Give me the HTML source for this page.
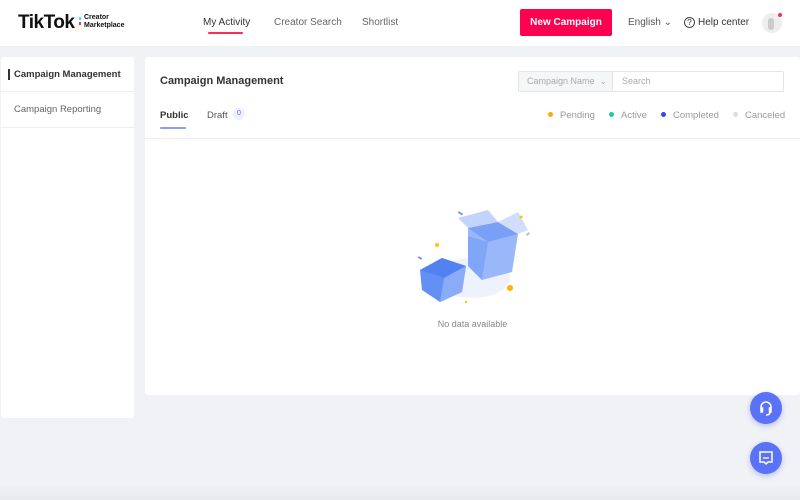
<!DOCTYPE html><html><head><style>
*{margin:0;padding:0;box-sizing:border-box}
body{width:800px;height:500px;background:#f1f2f5;font-family:"Liberation Sans",sans-serif;position:relative;overflow:hidden;color:#333}
.a{position:absolute}
</style></head><body>
<div class="a" style="left:0;top:0;width:800px;height:46px;background:#fff"></div>
<div class="a" style="left:18px;top:12px;font-size:19px;font-weight:bold;color:#111;letter-spacing:-0.5px">TikTok</div>
<div class="a" style="left:79px;top:17px;width:2px;height:3px;background:#25f4ee"></div>
<div class="a" style="left:79px;top:22px;width:2px;height:3px;background:#fe2c55"></div>
<div class="a" style="left:84px;top:14px;font-size:7px;font-weight:bold;line-height:8px;color:#111">Creator<br>Marketplace</div>
<div class="a" style="left:203px;top:17px;font-size:10px;color:#333">My Activity</div>
<div class="a" style="left:208px;top:32px;width:35px;height:2px;background:#fe2c55;border-radius:1px"></div>
<div class="a" style="left:274px;top:17px;font-size:10px;color:#666">Creator Search</div>
<div class="a" style="left:362px;top:17px;font-size:10px;color:#666">Shortlist</div>
<div class="a" style="left:520px;top:9px;width:92px;height:27px;background:#fe0050;border-radius:2px;color:#fff;font-size:10px;font-weight:bold;text-align:center;line-height:27px">New Campaign</div>
<div class="a" style="left:628px;top:17px;font-size:10px;color:#555">English ⌄</div>
<div class="a" style="left:684px;top:17px;width:11px;height:11px;border:1px solid #444;border-radius:50%;font-size:8px;text-align:center;line-height:9px">?</div>
<div class="a" style="left:698px;top:17px;font-size:10px;color:#333">Help center</div>
<div class="a" style="left:762px;top:13px;width:20px;height:20px;border-radius:50%;background:#eee"></div>
<div class="a" style="left:768px;top:18px;width:6px;height:12px;border-radius:3px;background:#ccc"></div>
<div class="a" style="left:778px;top:13px;width:4px;height:4px;border-radius:50%;background:#fe2c55"></div>

<div class="a" style="left:1px;top:57px;width:133px;height:361px;background:#fff;border-radius:3px"></div>
<div class="a" style="left:1px;top:91px;width:133px;height:1px;background:#eee"></div>
<div class="a" style="left:1px;top:127px;width:133px;height:1px;background:#eee"></div>
<div class="a" style="left:8px;top:69px;width:2px;height:11px;background:#333"></div>
<div class="a" style="left:14px;top:69px;font-size:9.5px;font-weight:bold;color:#333">Campaign Management</div>
<div class="a" style="left:14px;top:104px;font-size:9.5px;color:#666">Campaign Reporting</div>

<div class="a" style="left:145px;top:57px;width:655px;height:338px;background:#fff;border-radius:3px"></div>
<div class="a" style="left:160px;top:75px;font-size:11px;font-weight:bold;color:#333">Campaign Management</div>
<div class="a" style="left:518px;top:71px;width:266px;height:21px;border:1px solid #e3e5ea;border-radius:2px;background:#fff"></div>
<div class="a" style="left:519px;top:72px;width:94px;height:19px;background:#f5f6f8;border-right:1px solid #e3e5ea;font-size:9px;color:#aaa;line-height:19px;padding-left:8px">Campaign Name &nbsp;⌄</div>
<div class="a" style="left:622px;top:76px;font-size:9px;color:#aaa">Search</div>
<div class="a" style="left:160px;top:110px;font-size:9.5px;font-weight:bold;color:#333">Public</div>
<div class="a" style="left:160px;top:127px;width:26px;height:2px;background:#8c9cf5;border-radius:1px"></div>
<div class="a" style="left:207px;top:110px;font-size:9.5px;color:#555">Draft</div>
<div class="a" style="left:233px;top:108px;width:12px;height:12px;border-radius:50%;background:#eef0fd;color:#5b6cf0;font-size:7px;text-align:center;line-height:12px">0</div>
<div class="a" style="left:145px;top:138px;width:655px;height:1px;background:#eee"></div>
<div class="a" style="left:548px;top:112px;width:5px;height:5px;border-radius:50%;background:#ffab00"></div>
<div class="a" style="left:560px;top:110px;font-size:9.5px;color:#999">Pending</div>
<div class="a" style="left:609px;top:112px;width:5px;height:5px;border-radius:50%;background:#1dc9a0"></div>
<div class="a" style="left:621px;top:110px;font-size:9.5px;color:#999">Active</div>
<div class="a" style="left:661px;top:112px;width:5px;height:5px;border-radius:50%;background:#3744f5"></div>
<div class="a" style="left:673px;top:110px;font-size:9.5px;color:#999">Completed</div>
<div class="a" style="left:733px;top:112px;width:5px;height:5px;border-radius:50%;background:#ddd"></div>
<div class="a" style="left:745px;top:110px;font-size:9.5px;color:#999">Canceled</div>

<svg class="a" style="left:410px;top:200px" width="130" height="110">
<ellipse cx="62" cy="78" rx="38" ry="20" fill="#eef2fc"/>
<polygon points="58,28 88,22 108,34 102,72 72,80 58,66" fill="#9ab8f9"/>
<polygon points="58,28 88,22 108,34 78,42" fill="#7aa0f6"/>
<polygon points="58,36 78,42 72,80 58,66" fill="#80a6f7"/>
<polygon points="48,18 78,10 88,22 58,28" fill="#c2d4fb"/>
<polygon points="88,22 108,12 118,30 108,34" fill="#d0ddfc"/>
<polygon points="10,70 32,58 56,66 52,92 30,102 12,90" fill="#6490f4"/>
<polygon points="10,70 32,58 56,66 34,78" fill="#5282f2"/>
<polygon points="34,78 56,66 52,92 30,102" fill="#8aacf7"/>
<circle cx="27" cy="45" r="2" fill="#ffc107"/><circle cx="100" cy="88" r="3" fill="#ffb300"/>
<circle cx="111" cy="17" r="1.5" fill="#ffc107"/><circle cx="56" cy="102" r="1.2" fill="#ffc107"/>
<rect x="48" y="12" width="5" height="2" fill="#7a96f0" transform="rotate(30 50 13)"/>
<rect x="8" y="57" width="4" height="2" fill="#7a96f0" transform="rotate(30 10 58)"/>
<rect x="116" y="33" width="4" height="2" fill="#a8bdf5" transform="rotate(-40 118 34)"/>
</svg>
<div class="a" style="left:400px;top:319px;width:145px;text-align:center;font-size:9px;color:#888">No data available</div>

<div class="a" style="left:750px;top:392px;width:32px;height:32px;border-radius:50%;background:#5a72f7;box-shadow:0 2px 6px rgba(90,114,247,.4)"></div>
<svg class="a" style="left:750px;top:392px" width="32" height="32"><path d="M11 18v-3a5 5 0 0 1 10 0v3M11 16h1.5v4H11zM19.5 16H21v4h-1.5zM20 20q0 3-4 3" fill="none" stroke="#fff" stroke-width="1.5"/></svg>
<div class="a" style="left:750px;top:442px;width:32px;height:32px;border-radius:50%;background:#5a72f7;box-shadow:0 2px 6px rgba(90,114,247,.4)"></div>
<svg class="a" style="left:750px;top:442px" width="32" height="32"><path d="M10 10h12v10h-4l-2 2-2-2h-4z" fill="none" stroke="#fff" stroke-width="1.5"/><path d="M13 16h6" stroke="#fff" stroke-width="1.3"/></svg>
<div class="a" style="left:0;top:485px;width:800px;height:15px;background:linear-gradient(#f1f2f5,#e8e9ec)"></div>
</body></html>
